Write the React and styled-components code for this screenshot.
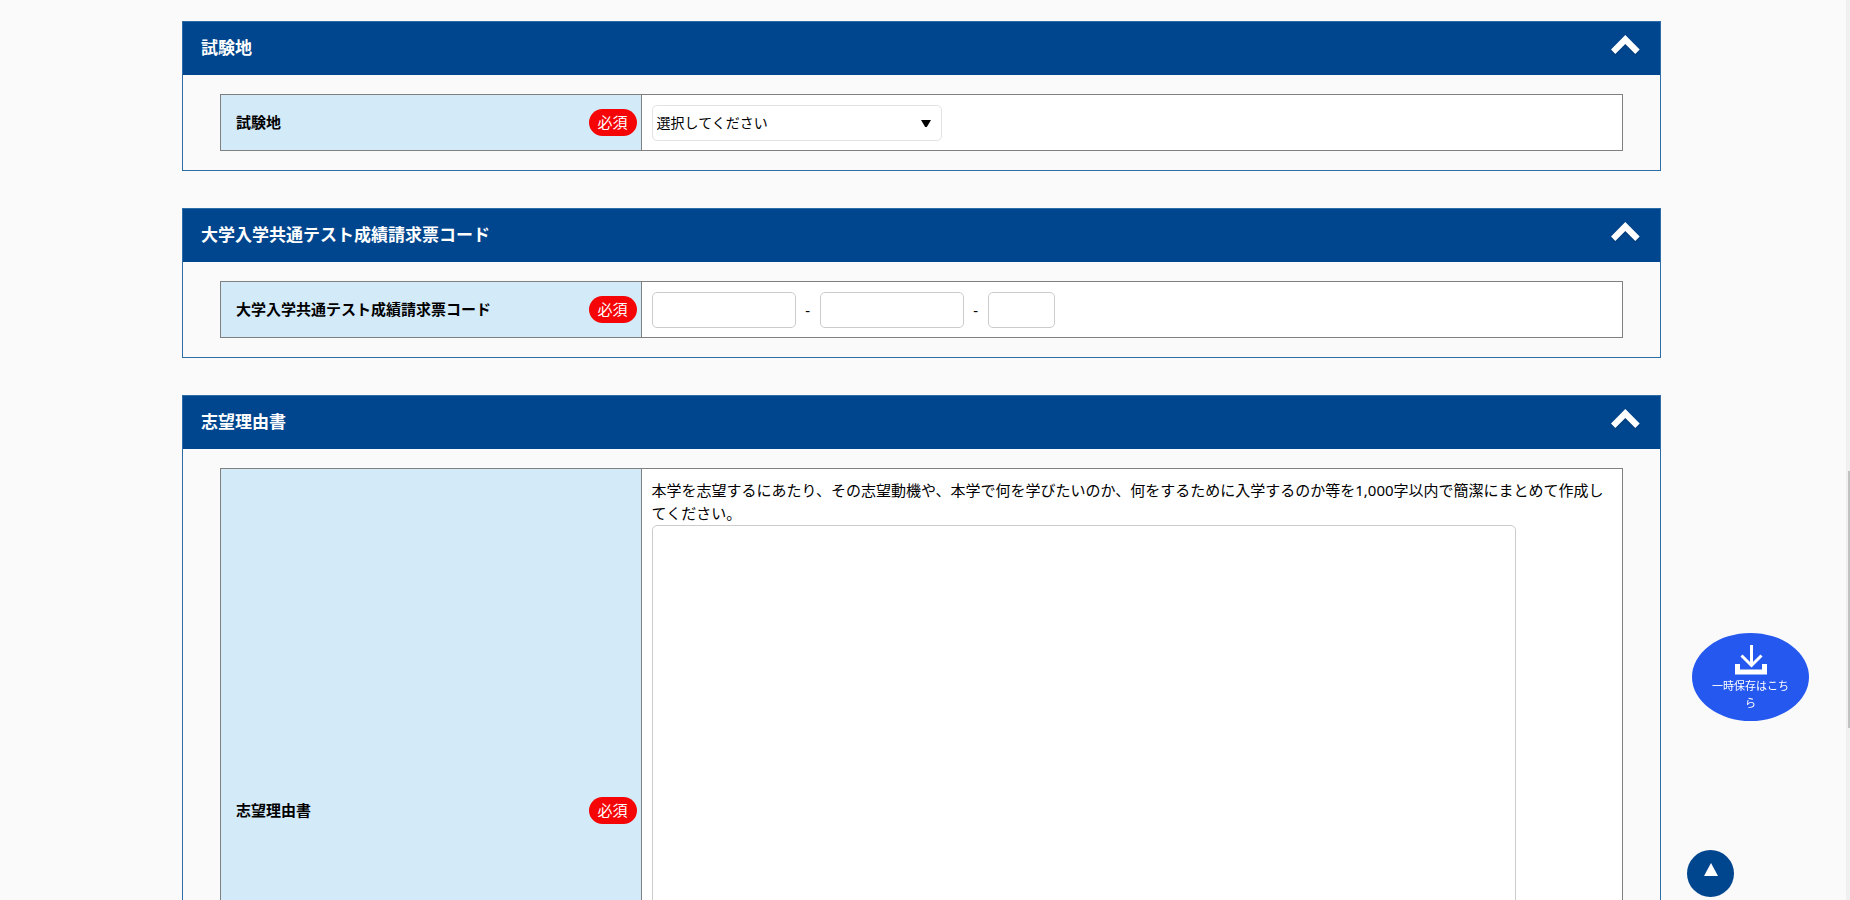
import React, { useState } from "react";
import styled, { createGlobalStyle } from "styled-components";

const GlobalStyle = createGlobalStyle`
  * {
    box-sizing: border-box;
  }
  html {
    scrollbar-width: none;
  }
  body {
    margin: 0;
    background: #fafafa;
    color: #000;
    font-family: "Noto Sans", "Noto Sans CJK JP", sans-serif;
    font-size: 15px;
    line-height: 23px;
  }
  button, input, select, textarea {
    font: inherit;
    color: inherit;
  }
`;

const Form = styled.form`
  display: flex;
  flex-direction: column;
  gap: 37px;
  padding: 21px 189px 36px 182px;
`;
const Panel = styled.section`
  border: 1px solid #2e6ca8;
`;
const PanelHeader = styled.header`
  display: flex;
  align-items: center;
  justify-content: space-between;
  height: 53px;
  padding: 0 20px 0 18px;
  background: #00468e;
  color: #fff;
`;
const PanelTitle = styled.h2`
  margin: 0;
  padding-bottom: 2px;
  font-size: 17px;
  font-weight: 700;
`;
const ToggleButton = styled.button`
  display: flex;
  padding: 0 0 8px;
  border: 0;
  background: none;
  cursor: pointer;

  svg {
    filter: drop-shadow(0 1px 1px rgba(0, 0, 0, 0.2));
    transform: ${({ $open }) => ($open ? "none" : "rotate(180deg)")};
  }
`;
const PanelBody = styled.div`
  padding: 19px 37px;
`;
const FieldTable = styled.table`
  width: 100%;
  table-layout: fixed;
  border-collapse: collapse;
`;
const LabelCell = styled.th`
  width: 30%;
  padding: 0 4px 0 15px;
  border: 1px solid #808080;
  background: #d3eaf8;
  text-align: left;
  vertical-align: middle;
`;
const LabelRow = styled.div`
  display: flex;
  align-items: center;
  justify-content: space-between;
`;
const Required = styled.span`
  padding: 2px 9px;
  border-radius: 14px;
  background: #f50505;
  color: #fff;
  font-weight: 400;
`;
const FieldCell = styled.td`
  padding: 10px 10px 9px;
  border: 1px solid #808080;
  background: #fff;
`;
const SelectBox = styled.div`
  display: grid;
  align-items: center;
  width: 290px;

  select,
  svg {
    grid-area: 1 / 1;
  }
  svg {
    justify-self: end;
    margin-right: 11px;
    pointer-events: none;
  }
`;
const Select = styled.select`
  width: 100%;
  height: 36px;
  padding: 0 4px 2px;
  border: 1px solid #e3e3e3;
  border-radius: 5px;
  background: #fff;
  font-size: 14px;
  appearance: none;
`;
const CodeRow = styled.div`
  display: flex;
  align-items: center;
`;
const Dash = styled.span`
  width: 24px;
  text-align: center;
`;
const CodeInput = styled.input`
  width: ${({ $short }) => ($short ? "67px" : "144px")};
  height: 36px;
  padding: 0 8px;
  border: 1px solid #ccc;
  border-radius: 5px;
  background: #fff;
`;
const Note = styled.p`
  margin: 0;
`;
const ReasonText = styled.textarea`
  display: block;
  width: 90%;
  height: 618px;
  padding: 8px;
  border: 1px solid #ccc;
  border-radius: 5px;
  background: #fff;
  resize: none;
`;
const SaveButton = styled.button`
  position: fixed;
  right: 41px;
  bottom: 179px;
  display: flex;
  flex-direction: column;
  align-items: center;
  width: 117px;
  height: 88px;
  padding: 12px 18px 0;
  border: 0;
  border-radius: 50%;
  background: #2458ef;
  color: #fff;
  font-size: 11px;
  line-height: 17px;
  cursor: pointer;
`;
const SaveText = styled.span`
  margin-top: 2px;
`;
const TopLink = styled.a`
  position: fixed;
  right: 116px;
  bottom: 3px;
  display: flex;
  align-items: center;
  justify-content: center;
  width: 47px;
  height: 47px;
  padding-bottom: 8px;
  border-radius: 50%;
  background: #00468e;
`;
const ScrollTrack = styled.div`
  position: fixed;
  top: 0;
  right: 0;
  bottom: 0;
  width: 4px;
  padding: 471px 0 0 2px;
  background: #f0f0f0;
`;
const ScrollThumb = styled.div`
  height: 257px;
  background: #c1c1c1;
`;

const Section = ({ title, children }) => {
  const [open, setOpen] = useState(true);

  return (
    <Panel>
      <PanelHeader>
        <PanelTitle>{title}</PanelTitle>
        <ToggleButton
          type="button"
          $open={open}
          aria-expanded={open}
          aria-label={`${title}の開閉`}
          onClick={() => setOpen(!open)}
        >
          <svg width="29" height="19" viewBox="0 0 29 19" fill="#fff">
            <path d="M14.3 0 28.7 14.6 24.3 19 14.3 9 4.3 19 0 14.6Z" />
          </svg>
        </ToggleButton>
      </PanelHeader>
      {open && <PanelBody>{children}</PanelBody>}
    </Panel>
  );
};

const Field = ({ id, label, children }) => (
  <FieldTable>
    <tbody>
      <tr>
        <LabelCell scope="row">
          <LabelRow>
            <label htmlFor={id}>{label}</label>
            <Required>必須</Required>
          </LabelRow>
        </LabelCell>
        <FieldCell>{children}</FieldCell>
      </tr>
    </tbody>
  </FieldTable>
);

const App = () => {
  return (
    <React.Fragment>
      <GlobalStyle />
      <Form>
        <Section title="試験地">
          <Field id="place" label="試験地">
            <SelectBox>
              <Select id="place">
                <option>選択してください</option>
              </Select>
              <svg width="10" height="7" viewBox="0 0 10 7">
                <path d="M0 0H10L5.8 7H4.2Z" />
              </svg>
            </SelectBox>
          </Field>
        </Section>

        <Section title="大学入学共通テスト成績請求票コード">
          <Field id="code1" label="大学入学共通テスト成績請求票コード">
            <CodeRow>
              <CodeInput id="code1" type="text" />
              <Dash>-</Dash>
              <CodeInput type="text" aria-label="コード 2" />
              <Dash>-</Dash>
              <CodeInput type="text" aria-label="コード 3" $short />
            </CodeRow>
          </Field>
        </Section>

        <Section title="志望理由書">
          <Field id="reason" label="志望理由書">
            <Note>
              本学を志望するにあたり、その志望動機や、本学で何を学びたいのか、何をするために入学するのか等を1,000字以内で簡潔にまとめて作成してください。
            </Note>
            <ReasonText id="reason" />
          </Field>
        </Section>
      </Form>

      <SaveButton type="button">
        <svg width="32" height="30" viewBox="0 0 32 30" fill="none" stroke="#fff">
          <path d="M16.5 0V20M6.5 10.5 16.5 20.5 26.5 10.5" strokeWidth="3" />
          <path d="M2.5 19V27H29.5V19" strokeWidth="5" />
        </svg>
        <SaveText>一時保存はこちら</SaveText>
      </SaveButton>
      <TopLink href="#" aria-label="ページの先頭へ">
        <svg width="14" height="13" viewBox="0 0 14 13" fill="#fff">
          <path d="M7 0 14 13H0Z" />
        </svg>
      </TopLink>
      <ScrollTrack>
        <ScrollThumb />
      </ScrollTrack>
    </React.Fragment>
  );
};

export default App;
